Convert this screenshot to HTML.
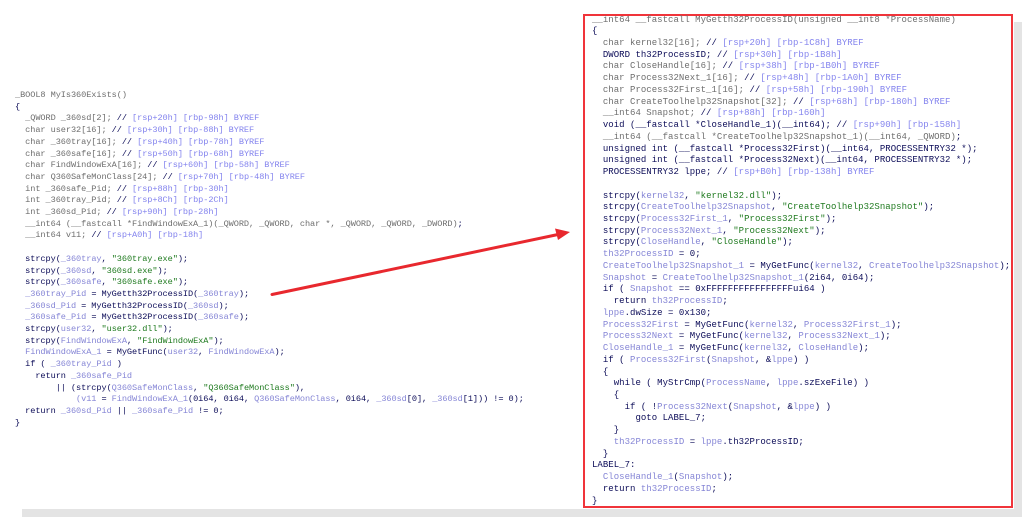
<!DOCTYPE html>
<html><head><meta charset="utf-8"><style>
html,body{margin:0;padding:0;background:#fff;width:1028px;height:523px;overflow:hidden;position:relative}
pre{margin:0;position:absolute;font-family:"Liberation Mono",monospace;white-space:pre}
#L{left:15px;top:90px;font-size:8.6px;line-height:11.7px;letter-spacing:-0.07px}
#R{left:592px;top:14.5px;font-size:9px;line-height:11.74px;letter-spacing:0.03px}
.g{color:#6e6e6e}.n{color:#0c0c58}.l{color:#8686d6}.s{color:#1f7a1f}.c{color:#8484ee}
#shb{position:absolute;left:22px;top:509px;width:996px;height:8px;background:#e4e4e4}
#shr{position:absolute;left:1014px;top:22px;width:8px;height:495px;background:#e4e4e4}
#box{position:absolute;left:583px;top:14px;width:426px;height:490px;border:2px solid #f0343a;background:#fff}
</style></head><body>
<div id="shb"></div><div id="shr"></div>
<div id="box"></div>
<pre id="L"><span class="g">_BOOL8 MyIs360Exists()</span>
<span class="n">{</span>
<span class="g">  _QWORD _360sd[2]; </span><span class="n">//</span><span class="c"> [rsp+20h] [rbp-98h] BYREF</span>
<span class="g">  char user32[16]; </span><span class="n">//</span><span class="c"> [rsp+30h] [rbp-88h] BYREF</span>
<span class="g">  char _360tray[16]; </span><span class="n">//</span><span class="c"> [rsp+40h] [rbp-78h] BYREF</span>
<span class="g">  char _360safe[16]; </span><span class="n">//</span><span class="c"> [rsp+50h] [rbp-68h] BYREF</span>
<span class="g">  char FindWindowExA[16]; </span><span class="n">//</span><span class="c"> [rsp+60h] [rbp-58h] BYREF</span>
<span class="g">  char Q360SafeMonClass[24]; </span><span class="n">//</span><span class="c"> [rsp+70h] [rbp-48h] BYREF</span>
<span class="g">  int _360safe_Pid; </span><span class="n">//</span><span class="c"> [rsp+88h] [rbp-30h]</span>
<span class="g">  int _360tray_Pid; </span><span class="n">//</span><span class="c"> [rsp+8Ch] [rbp-2Ch]</span>
<span class="g">  int _360sd_Pid; </span><span class="n">//</span><span class="c"> [rsp+90h] [rbp-28h]</span>
<span class="g">  __int64 (__fastcall *FindWindowExA_1)(_QWORD, _QWORD, char *, _QWORD, _QWORD, _DWORD)</span><span class="n">;</span>
<span class="g">  __int64 v11; </span><span class="n">//</span><span class="c"> [rsp+A0h] [rbp-18h]</span>

<span class="n">  strcpy(</span><span class="l">_360tray</span><span class="n">, </span><span class="s">"360tray.exe"</span><span class="n">);</span>
<span class="n">  strcpy(</span><span class="l">_360sd</span><span class="n">, </span><span class="s">"360sd.exe"</span><span class="n">);</span>
<span class="n">  strcpy(</span><span class="l">_360safe</span><span class="n">, </span><span class="s">"360safe.exe"</span><span class="n">);</span>
<span class="l">  _360tray_Pid</span><span class="n"> = MyGetth32ProcessID(</span><span class="l">_360tray</span><span class="n">);</span>
<span class="l">  _360sd_Pid</span><span class="n"> = MyGetth32ProcessID(</span><span class="l">_360sd</span><span class="n">);</span>
<span class="l">  _360safe_Pid</span><span class="n"> = MyGetth32ProcessID(</span><span class="l">_360safe</span><span class="n">);</span>
<span class="n">  strcpy(</span><span class="l">user32</span><span class="n">, </span><span class="s">"user32.dll"</span><span class="n">);</span>
<span class="n">  strcpy(</span><span class="l">FindWindowExA</span><span class="n">, </span><span class="s">"FindWindowExA"</span><span class="n">);</span>
<span class="l">  FindWindowExA_1</span><span class="n"> = MyGetFunc(</span><span class="l">user32</span><span class="n">, </span><span class="l">FindWindowExA</span><span class="n">);</span>
<span class="n">  if ( </span><span class="l">_360tray_Pid</span><span class="n"> )</span>
<span class="n">    return </span><span class="l">_360safe_Pid</span>
<span class="n">        || (strcpy(</span><span class="l">Q360SafeMonClass</span><span class="n">, </span><span class="s">"Q360SafeMonClass"</span><span class="n">),</span>
<span class="l">            (v11</span><span class="n"> = </span><span class="l">FindWindowExA_1</span><span class="n">(0i64, 0i64, </span><span class="l">Q360SafeMonClass</span><span class="n">, 0i64, </span><span class="l">_360sd</span><span class="n">[0], </span><span class="l">_360sd</span><span class="n">[1])) != 0);</span>
<span class="n">  return </span><span class="l">_360sd_Pid</span><span class="n"> || </span><span class="l">_360safe_Pid</span><span class="n"> != 0;</span>
<span class="n">}</span></pre>
<pre id="R"><span class="g">__int64 __fastcall MyGetth32ProcessID(unsigned __int8 *ProcessName)</span>
<span class="n">{</span>
<span class="g">  char kernel32[16]; </span><span class="n">//</span><span class="c"> [rsp+20h] [rbp-1C8h] BYREF</span>
<span class="n">  DWORD th32ProcessID; //</span><span class="c"> [rsp+30h] [rbp-1B8h]</span>
<span class="g">  char CloseHandle[16]; </span><span class="n">//</span><span class="c"> [rsp+38h] [rbp-1B0h] BYREF</span>
<span class="g">  char Process32Next_1[16]; </span><span class="n">//</span><span class="c"> [rsp+48h] [rbp-1A0h] BYREF</span>
<span class="g">  char Process32First_1[16]; </span><span class="n">//</span><span class="c"> [rsp+58h] [rbp-190h] BYREF</span>
<span class="g">  char CreateToolhelp32Snapshot[32]; </span><span class="n">//</span><span class="c"> [rsp+68h] [rbp-180h] BYREF</span>
<span class="g">  __int64 Snapshot; </span><span class="n">//</span><span class="c"> [rsp+88h] [rbp-160h]</span>
<span class="n">  void (__fastcall *CloseHandle_1)(__int64); //</span><span class="c"> [rsp+90h] [rbp-158h]</span>
<span class="g">  __int64 (__fastcall *CreateToolhelp32Snapshot_1)(__int64, _QWORD)</span><span class="n">;</span>
<span class="n">  unsigned int (__fastcall *Process32First)(__int64, PROCESSENTRY32 *);</span>
<span class="n">  unsigned int (__fastcall *Process32Next)(__int64, PROCESSENTRY32 *);</span>
<span class="n">  PROCESSENTRY32 lppe; //</span><span class="c"> [rsp+B0h] [rbp-138h] BYREF</span>

<span class="n">  strcpy(</span><span class="l">kernel32</span><span class="n">, </span><span class="s">"kernel32.dll"</span><span class="n">);</span>
<span class="n">  strcpy(</span><span class="l">CreateToolhelp32Snapshot</span><span class="n">, </span><span class="s">"CreateToolhelp32Snapshot"</span><span class="n">);</span>
<span class="n">  strcpy(</span><span class="l">Process32First_1</span><span class="n">, </span><span class="s">"Process32First"</span><span class="n">);</span>
<span class="n">  strcpy(</span><span class="l">Process32Next_1</span><span class="n">, </span><span class="s">"Process32Next"</span><span class="n">);</span>
<span class="n">  strcpy(</span><span class="l">CloseHandle</span><span class="n">, </span><span class="s">"CloseHandle"</span><span class="n">);</span>
<span class="l">  th32ProcessID</span><span class="n"> = 0;</span>
<span class="l">  CreateToolhelp32Snapshot_1</span><span class="n"> = MyGetFunc(</span><span class="l">kernel32</span><span class="n">, </span><span class="l">CreateToolhelp32Snapshot</span><span class="n">);</span>
<span class="l">  Snapshot</span><span class="n"> = </span><span class="l">CreateToolhelp32Snapshot_1</span><span class="n">(2i64, 0i64);</span>
<span class="n">  if ( </span><span class="l">Snapshot</span><span class="n"> == 0xFFFFFFFFFFFFFFFFui64 )</span>
<span class="n">    return </span><span class="l">th32ProcessID</span><span class="n">;</span>
<span class="l">  lppe</span><span class="n">.dwSize = 0x130;</span>
<span class="l">  Process32First</span><span class="n"> = MyGetFunc(</span><span class="l">kernel32</span><span class="n">, </span><span class="l">Process32First_1</span><span class="n">);</span>
<span class="l">  Process32Next</span><span class="n"> = MyGetFunc(</span><span class="l">kernel32</span><span class="n">, </span><span class="l">Process32Next_1</span><span class="n">);</span>
<span class="l">  CloseHandle_1</span><span class="n"> = MyGetFunc(</span><span class="l">kernel32</span><span class="n">, </span><span class="l">CloseHandle</span><span class="n">);</span>
<span class="n">  if ( </span><span class="l">Process32First</span><span class="n">(</span><span class="l">Snapshot</span><span class="n">, &amp;</span><span class="l">lppe</span><span class="n">) )</span>
<span class="n">  {</span>
<span class="n">    while ( MyStrCmp(</span><span class="l">ProcessName</span><span class="n">, </span><span class="l">lppe</span><span class="n">.szExeFile) )</span>
<span class="n">    {</span>
<span class="n">      if ( !</span><span class="l">Process32Next</span><span class="n">(</span><span class="l">Snapshot</span><span class="n">, &amp;</span><span class="l">lppe</span><span class="n">) )</span>
<span class="n">        goto LABEL_7;</span>
<span class="n">    }</span>
<span class="l">    th32ProcessID</span><span class="n"> = </span><span class="l">lppe</span><span class="n">.th32ProcessID;</span>
<span class="n">  }</span>
<span class="n">LABEL_7:</span>
<span class="l">  CloseHandle_1</span><span class="n">(</span><span class="l">Snapshot</span><span class="n">);</span>
<span class="n">  return </span><span class="l">th32ProcessID</span><span class="n">;</span>
<span class="n">}</span></pre>
<svg style="position:absolute;left:0;top:0" width="1028" height="523">
<line x1="272" y1="294.5" x2="558" y2="234.5" stroke="#e8282e" stroke-width="3" stroke-linecap="round"/>
<polygon points="570,232 555,228.5 558,240" fill="#e8282e"/>
</svg>
</body></html>
